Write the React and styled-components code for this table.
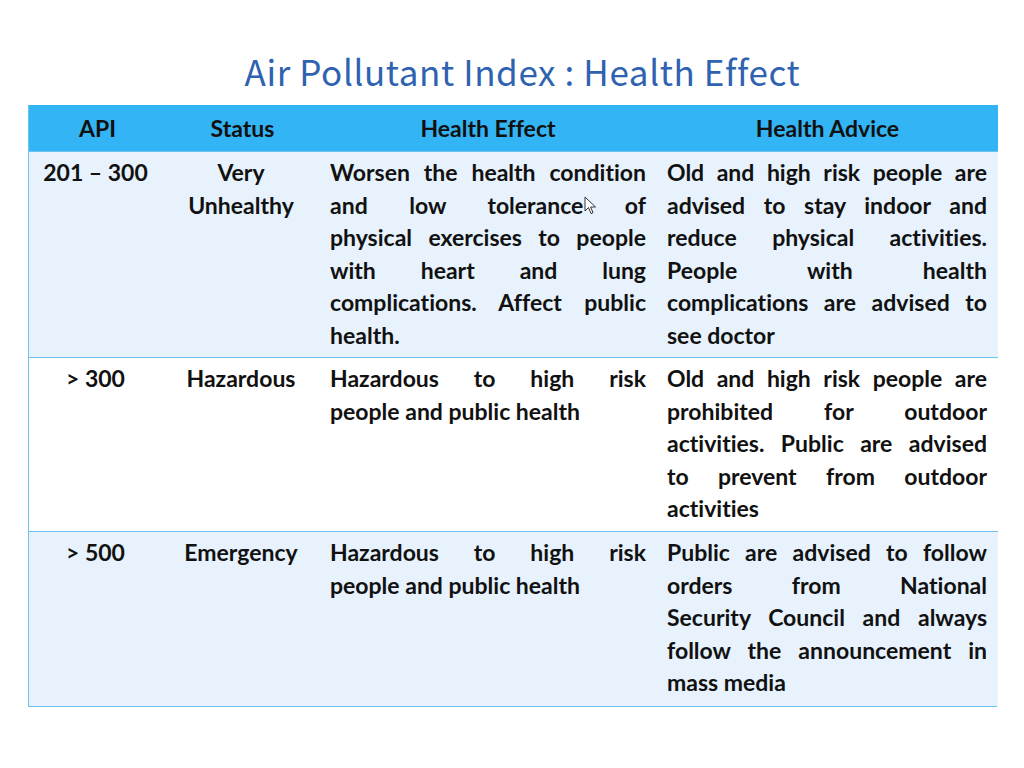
import React from "react";
import styled, { createGlobalStyle } from "styled-components";

const GlobalStyle = createGlobalStyle`
  html, body {
    margin: 0;
    padding: 0;
    background: #ffffff;
  }
`;

const Page = styled.div`
  width: 1024px;
  height: 768px;
  padding: 0 27px 0 28px;
  box-sizing: border-box;
  font-family: Lato, "Liberation Sans", sans-serif;
  font-variant-ligatures: none;
  position: relative;
`;

const Title = styled.h1`
  margin: 0;
  height: 105px;
  box-sizing: border-box;
  padding: 49px 0 0 20px;
  text-align: center;
  font-family: "Noto Sans CJK JP", "Noto Sans", sans-serif;
  font-weight: 400;
  font-size: 35px;
  line-height: 44px;
  color: #2f62b0;
  letter-spacing: 0.6px;
`;

const Table = styled.div`
  display: grid;
  grid-template-columns: 137px 153px 338px 341px;
  border: 1px solid #6ec3ee;
  border-top: none;
`;

const HeadCell = styled.div`
  background: #33b4f4;
  height: 46px;
  display: flex;
  align-items: center;
  justify-content: center;
  font-weight: 700;
  font-size: 23px;
  color: #111;
`;

const Cell = styled.div`
  background: ${(p) => (p.$shade ? "#e7f2fc" : "#ffffff")};
  border-top: 1px solid #6ec3ee;
  padding: ${(p) => p.$pad || "4px 11px 5px 11px"};
  min-height: ${(p) => p.$h}px;
  box-sizing: border-box;
  font-weight: 700;
  font-size: 23px;
  line-height: 32.5px;
  color: #111;
  text-align: ${(p) => (p.$center ? "center" : "left")};
`;

const Line = styled.div`
  text-align: ${(p) => (p.$last ? "left" : "justify")};
  text-align-last: ${(p) => (p.$last ? "left" : "justify")};
`;

const CenterLine = styled.div`
  white-space: nowrap;
`;

const Cursor = styled.svg`
  position: absolute;
  left: 584px;
  top: 196px;
`;

const rows = [
  {
    api: "201 – 300",
    status: ["Very", "Unhealthy"],
    effect: [
      "Worsen the health condition",
      "and low tolerance of",
      "physical exercises to people",
      "with heart and lung",
      "complications. Affect public",
      "health.",
    ],
    advice: [
      "Old and high risk people are",
      "advised to stay indoor and",
      "reduce physical activities.",
      "People with health",
      "complications are advised to",
      "see doctor",
    ],
    shade: true,
    h: 206,
  },
  {
    api: "> 300",
    status: ["Hazardous"],
    effect: ["Hazardous to high risk", "people and public health"],
    advice: [
      "Old and high risk people are",
      "prohibited for outdoor",
      "activities. Public are advised",
      "to prevent from outdoor",
      "activities",
    ],
    shade: false,
    h: 174,
  },
  {
    api: "> 500",
    status: ["Emergency"],
    effect: ["Hazardous to high risk", "people and public health"],
    advice: [
      "Public are advised to follow",
      "orders from National",
      "Security Council and always",
      "follow  the announcement in",
      "mass media",
    ],
    shade: true,
    h: 175,
  },
];

function Lines({ lines }) {
  return lines.map((l, i) => (
    <Line key={i} $last={i === lines.length - 1}>
      {l}
    </Line>
  ));
}

export default function App() {
  return (
    <Page>
      <GlobalStyle />
      <Title>Air Pollutant Index : Health Effect</Title>
      <Table>
        <HeadCell>API</HeadCell>
        <HeadCell>Status</HeadCell>
        <HeadCell>Health Effect</HeadCell>
        <HeadCell>Health Advice</HeadCell>
        {rows.map((r, i) => (
          <React.Fragment key={i}>
            <Cell $shade={r.shade} $h={r.h} $center $pad="4px 4px 5px 0">
              <CenterLine>{r.api}</CenterLine>
            </Cell>
            <Cell $shade={r.shade} $h={r.h} $center $pad="4px 3px 5px 0">
              {r.status.map((s, j) => (
                <CenterLine key={j}>{s}</CenterLine>
              ))}
            </Cell>
            <Cell $shade={r.shade} $h={r.h}>
              <Lines lines={r.effect} />
            </Cell>
            <Cell $shade={r.shade} $h={r.h} $pad="4px 11px 5px 10px">
              <Lines lines={r.advice} />
            </Cell>
          </React.Fragment>
        ))}
      </Table>
      <Cursor width="14" height="20" viewBox="0 0 14 20">
        <path
          d="M1 1 L1 15 L4.5 11.5 L7 17.5 L9 16.7 L6.6 11 L11.5 11 Z"
          fill="#ffffff"
          stroke="#333"
          strokeWidth="1"
          strokeLinejoin="round"
        />
      </Cursor>
    </Page>
  );
}
